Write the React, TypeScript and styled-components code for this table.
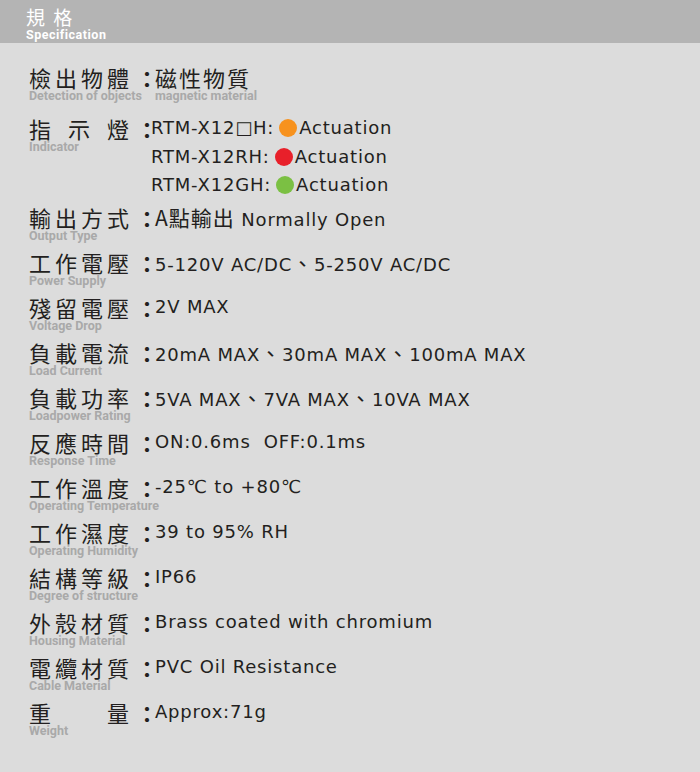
import React from 'react';
import styled, { createGlobalStyle } from 'styled-components';

const GlobalStyle = createGlobalStyle`
  html, body {
    margin: 0;
    padding: 0;
    background: #dcdcdc;
  }
`;

type Spec = {
  label: string;
  sub: string;
  value: React.ReactNode;
};

const specs: Spec[] = [
  { label: '輸出方式', sub: 'Output Type', value: <><Cjk>A點輸出</Cjk> Normally Open</> },
  { label: '工作電壓', sub: 'Power Supply', value: <>5-120V AC/DC<Cjk>、</Cjk>5-250V AC/DC</> },
  { label: '殘留電壓', sub: 'Voltage Drop', value: '2V MAX' },
  { label: '負載電流', sub: 'Load Current', value: <>20mA MAX<Cjk>、</Cjk>30mA MAX<Cjk>、</Cjk>100mA MAX</> },
  { label: '負載功率', sub: 'Loadpower Rating', value: <>5VA MAX<Cjk>、</Cjk>7VA MAX<Cjk>、</Cjk>10VA MAX</> },
  { label: '反應時間', sub: 'Response Time', value: <>ON:0.6ms&nbsp;&nbsp;OFF:0.1ms</> },
  { label: '工作溫度', sub: 'Operating Temperature', value: '-25℃ to +80℃' },
  { label: '工作濕度', sub: 'Operating Humidity', value: '39 to 95% RH' },
  { label: '結構等級', sub: 'Degree of structure', value: 'IP66' },
  { label: '外殼材質', sub: 'Housing Material', value: 'Brass coated with chromium' },
  { label: '電纜材質', sub: 'Cable Material', value: 'PVC Oil Resistance' },
  { label: '重量', sub: 'Weight', value: 'Approx:71g' },
];

const indicators = [
  { model: 'RTM-X12□H:', color: '#f7921e' },
  { model: 'RTM-X12RH:', color: '#e8202a' },
  { model: 'RTM-X12GH:', color: '#7bc043' },
];

function Cjk({ children }: { children: React.ReactNode }) {
  return <CjkText>{children}</CjkText>;
}

export default function App() {
  return (
    <Page>
      <GlobalStyle />
      <Header>
        <HeaderTitle>規 格</HeaderTitle>
        <HeaderSub>Specification</HeaderSub>
      </Header>

      <List>
        <Row $extra={6}>
          <LabelCell>
            <Label>檢出物體</Label>
            <Sub>Detection of objects</Sub>
          </LabelCell>
          <Colon>：</Colon>
          <ValueCell>
            <CjkValue>磁性物質</CjkValue>
            <Sub>magnetic material</Sub>
          </ValueCell>
        </Row>

        <Row $extra={-3}>
          <LabelCell>
            <Label>指示燈</Label>
            <Sub>Indicator</Sub>
          </LabelCell>
          <Colon>：</Colon>
          <ValueCell $tight>
            {indicators.map((it) => (
              <IndicatorLine key={it.model}>
                {it.model}
                <Dot $color={it.color} />
                Actuation
              </IndicatorLine>
            ))}
          </ValueCell>
        </Row>

        {specs.map((s) => (
          <Row key={s.label}>
            <LabelCell>
              <Label>{s.label}</Label>
              <Sub>{s.sub}</Sub>
            </LabelCell>
            <Colon>：</Colon>
            <ValueCell>
              <Value>{s.value}</Value>
            </ValueCell>
          </Row>
        ))}
      </List>
    </Page>
  );
}

const Page = styled.div`
  width: 700px;
  height: 772px;
  overflow: hidden;
  background: #dcdcdc;
  color: #231f20;
`;

const Header = styled.header`
  height: 43px;
  background: #b4b4b4;
  padding: 0 0 1px 26px;
  box-sizing: border-box;
  display: flex;
  flex-direction: column;
  justify-content: flex-end;
  color: #ffffff;
`;

const HeaderTitle = styled.div`
  font-family: 'Noto Sans CJK TC', sans-serif;
  font-size: 19px;
  line-height: 22px;
  font-weight: 400;
  letter-spacing: 2px;
`;

const HeaderSub = styled.div`
  font-family: Roboto, 'Liberation Sans', sans-serif;
  font-size: 12.5px;
  line-height: 14px;
  font-weight: 700;
  letter-spacing: 0.5px;
`;

const List = styled.div`
  display: flex;
  flex-direction: column;
  gap: 8px;
  padding: 22px 0 0 29px;
`;

const Row = styled.div<{ $extra?: number }>`
  display: grid;
  grid-template-columns: 100px 26px 1fr;
  align-items: start;
  margin-bottom: ${({ $extra }) => $extra ?? 0}px;
`;

const LabelCell = styled.div`
  display: flex;
  flex-direction: column;
`;

const Label = styled.div`
  font-family: 'Noto Sans CJK TC', sans-serif;
  font-size: 22px;
  line-height: 24px;
  font-weight: 400;
  text-align: justify;
  text-align-last: justify;
  white-space: nowrap;
`;

const Sub = styled.div`
  font-family: Roboto, 'Liberation Sans', sans-serif;
  font-size: 12.5px;
  line-height: 13px;
  font-weight: 700;
  color: #a9a9a9;
  white-space: nowrap;
`;

const Colon = styled.div`
  font-family: 'Noto Sans CJK TC', sans-serif;
  font-size: 22px;
  line-height: 24px;
  font-weight: 700;
  padding-left: 7px;
  white-space: nowrap;
`;

const ValueCell = styled.div<{ $tight?: boolean }>`
  display: flex;
  flex-direction: column;
  margin-left: ${({ $tight }) => ($tight ? '-4px' : '0')};
  margin-top: ${({ $tight }) => ($tight ? '-2px' : '0')};
`;

const Value = styled.div`
  font-family: 'DejaVu Sans', sans-serif;
  font-size: 18px;
  line-height: 24px;
  letter-spacing: 0.8px;
  white-space: nowrap;
`;

const CjkValue = styled.div`
  font-family: 'Noto Sans CJK TC', sans-serif;
  font-size: 22px;
  line-height: 24px;
  letter-spacing: 2px;
  white-space: nowrap;
`;

const CjkText = styled.span`
  font-family: 'Noto Sans CJK TC', sans-serif;
  font-size: 21px;
  font-weight: 400;
  letter-spacing: 1px;
`;

const IndicatorLine = styled.div`
  display: flex;
  align-items: center;
  font-family: 'DejaVu Sans', sans-serif;
  font-size: 18px;
  line-height: 28.5px;
  letter-spacing: 0.8px;
  white-space: nowrap;
`;

const Dot = styled.span<{ $color: string }>`
  display: inline-block;
  width: 18px;
  height: 18px;
  border-radius: 50%;
  background: ${({ $color }) => $color};
  margin: 0 2px 0 5px;
`;
